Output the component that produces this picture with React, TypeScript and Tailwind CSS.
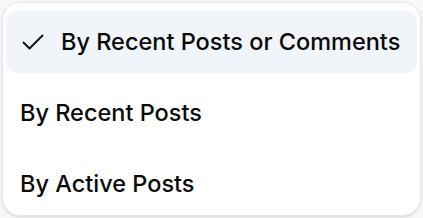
import React from "react";

const options = [
  { label: "By Recent Posts or Comments", selected: true },
  { label: "By Recent Posts", selected: false },
  { label: "By Active Posts", selected: false },
];

function Check() {
  return (
    <svg width="22" height="16" viewBox="0 0 22 16" fill="none" stroke="#111" strokeWidth="1.9" strokeLinecap="round" strokeLinejoin="round">
      <path d="M1.5 8.5l6 6L20.5 1.5" />
    </svg>
  );
}

export default function App() {
  return (
    <div className="w-[423px] h-[218px] bg-[#f7f7f8] p-[2px]" style={{ fontFamily: "Inter, 'Noto Sans', sans-serif" }}>
      <div className="h-full rounded-[18px] bg-white border border-[#e6e8ec] shadow-sm px-[3px] pt-[8px] flex flex-col">
        {options.map((o) => (
          <div
            key={o.label}
            className={`h-[62px] mb-[9px] shrink-0 rounded-[12px] flex items-center text-[23.5px] font-medium text-[#0a0a0a] ${o.selected ? "bg-[#f1f4f9] pl-[16px]" : "pl-[14px]"}`}
          >
            {o.selected && <span className="mr-[17px] flex"><Check /></span>}
            {o.label}
          </div>
        ))}
      </div>
    </div>
  );
}
